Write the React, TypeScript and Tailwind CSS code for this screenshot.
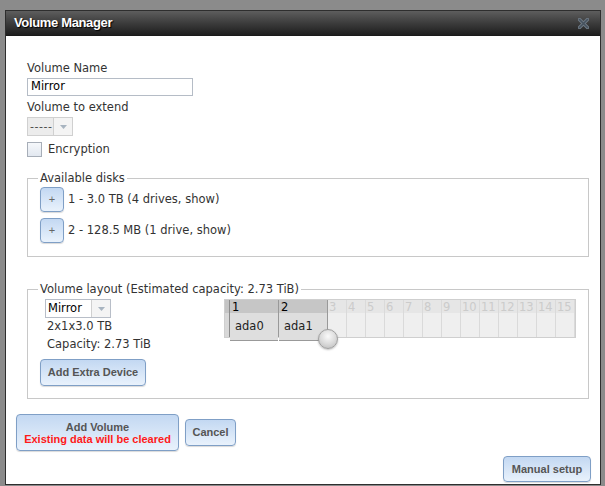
import React from "react";

const body = { fontFamily: '"DejaVu Sans", Verdana, sans-serif' };
const btnFont = { fontFamily: '"Liberation Sans", Tahoma, Arial, sans-serif' };

const blueBtn =
  "rounded-[4px] border border-[#7f9fc6] bg-gradient-to-b from-[#c3d8f2] to-[#e9f2fc] shadow-[0_1px_1px_rgba(0,0,0,0.15)] text-[#555] font-bold text-[11px]";

const SLOTS = [3, 4, 5, 6, 7, 8, 9, 10, 11, 12, 13, 14, 15];

function ArrowBox() {
  return (
    <div className="flex h-full w-[19px] items-center justify-center border-l border-[#d0d0d0] bg-[#f4f4f4]">
      <svg width="7" height="4" viewBox="0 0 7 4">
        <path d="M0 0 L7 0 L3.5 4 Z" fill="#a8b4c0" />
      </svg>
    </div>
  );
}

function DiskGrid() {
  return (
    <div className="relative mt-[2px] flex h-[39px] border border-[#cfcfcf]" style={body}>
      {/* left gutter */}
      <div className="flex w-[5px] flex-col border-r border-[#8c8c8c]">
        <div className="h-[13px] bg-[#c4c4c4]" />
        <div className="flex-1 bg-[#d8d8d8]" />
      </div>
      {["ada0", "ada1"].map((d, i) => (
        <div key={d} className="flex w-[49px] flex-col border-r border-[#999]">
          <div className="h-[13px] bg-[#c6c6c6] pl-[2px] text-[11.5px] leading-[14px] text-black">
            {i + 1}
          </div>
          <div className="flex-1 border-b border-[#999] bg-[#dedede] pl-[5px] text-[11.5px] leading-[27px] text-[#222]">
            {d}
          </div>
        </div>
      ))}
      {SLOTS.map((n) => (
        <div key={n} className="flex w-[19px] flex-col border-r border-[#dadada] last:border-r-0">
          <div className="h-[13px] bg-[#e6e6e6] pl-[1px] text-[11.5px] leading-[14px] text-[#cbcbcb]">
            {n}
          </div>
          <div className="flex-1 bg-[#efefef]" />
        </div>
      ))}
      {/* resize handle */}
      <div className="absolute left-[93px] top-[29px] h-[20px] w-[20px] rounded-full border border-[#a0a0a0] bg-[radial-gradient(circle_at_50%_35%,#fafafa_0%,#dcdcdc_50%,#b8b8b8_100%)] shadow-[0_1px_2px_rgba(0,0,0,0.25)]" />
    </div>
  );
}

export default function App() {
  return (
    <div className="h-[486px] w-[605px] overflow-hidden bg-[#8b8b8b] pl-[5px] pt-[10px]" style={body}>
      <div className="flex h-[475px] w-[596px] flex-col border border-[#2e2e2e] bg-white">
        {/* Title bar */}
        <div className="flex h-[25px] items-center justify-between border-b border-[#1a1a1a] bg-gradient-to-b from-[#5e5e5e] to-[#1e1e1e] pl-[8px] pr-[11px]">
          <span
            className="text-[13px] font-bold tracking-[-0.35px] text-white [text-shadow:1px_1px_1px_#000]"
            style={btnFont}
          >
            Volume Manager
          </span>
          <svg width="11" height="11" viewBox="0 0 11 11">
            <path d="M1.5 1.5 L9.5 9.5 M9.5 1.5 L1.5 9.5" stroke="#6f7a85" strokeWidth="3.4" strokeLinecap="round" />
            <path d="M1.5 1.5 L9.5 9.5 M9.5 1.5 L1.5 9.5" stroke="#46525e" strokeWidth="1.6" strokeLinecap="round" />
          </svg>
        </div>

        {/* Body */}
        <div className="flex flex-1 flex-col pl-[21px] pt-[24px] text-[11.5px] text-[#333]">
          <div className="h-[16px] leading-[16px]">Volume Name</div>
          <div className="mt-[2px] flex h-[18px] w-[166px] items-center border border-[#b5bcc6] pl-[3px] text-black">
            Mirror
          </div>
          <div className="mt-[3px] h-[16px] leading-[16px]">Volume to extend</div>
          <div className="mt-[2px] flex h-[19px] w-[46px] items-center border border-[#d0d0d0] bg-[#ececec]">
            <div className="flex-1 pl-[2px] text-[11px] leading-none tracking-[0.5px] text-[#444]">-----</div>
            <ArrowBox />
          </div>
          <div className="mt-[6px] flex items-center">
            <div className="h-[15px] w-[15px] border border-[#a7aeb8] bg-gradient-to-b from-[#f6f8fb] to-[#e2e8f0]" />
            <span className="ml-[6px] leading-[15px]">Encryption</span>
          </div>

          {/* Available disks */}
          <fieldset className="mt-[13px] w-[562px] border border-[#c8c8c8] px-[10px] pb-[13px] pt-0">
            <legend className="px-[2px] leading-[16px]">Available disks</legend>
            <div className="mt-[1px] flex flex-col gap-[6px] pl-[2px]">
              {["1 - 3.0 TB (4 drives, show)", "2 - 128.5 MB (1 drive, show)"].map((t) => (
                <div key={t} className="flex items-center">
                  <button className={`${blueBtn} flex h-[25px] w-[24px] items-center justify-center font-normal text-[#666]`} style={btnFont}>
                    +
                  </button>
                  <span className="ml-[4px]">{t}</span>
                </div>
              ))}
            </div>
          </fieldset>

          {/* Volume layout */}
          <fieldset className="mt-[24px] w-[562px] border border-[#c8c8c8] px-[10px] pb-[12px] pt-0">
            <legend className="px-[2px] leading-[16px]">Volume layout (Estimated capacity: 2.73 TiB)</legend>
            <div className="flex pl-[2px]">
              <div className="flex w-[184px] flex-col">
                <div className="ml-[5px] mt-[2px] flex h-[19px] w-[66px] items-center border border-[#b8bec8] bg-white">
                  <div className="flex-1 pl-[2px] text-black">Mirror</div>
                  <ArrowBox />
                </div>
                <div className="ml-[7px] h-[16px] leading-[16px]">2x1x3.0 TB</div>
                <div className="ml-[7px] mt-[2px] h-[16px] leading-[16px]">Capacity: 2.73 TiB</div>
                <button className={`${blueBtn} mt-[7px] h-[27px] w-[106px]`} style={btnFont}>
                  Add Extra Device
                </button>
              </div>
              <div>
                <DiskGrid />
              </div>
            </div>
          </fieldset>

          {/* Actions */}
          <div className="ml-[-11px] mt-[15px] flex items-center gap-[6px]" style={btnFont}>
            <button className={`${blueBtn} flex h-[37px] w-[163px] flex-col items-center justify-center leading-[12px]`}>
              <span>Add Volume</span>
              <span className="text-[#ff1a1a]">Existing data will be cleared</span>
            </button>
            <button className={`${blueBtn} h-[27px] w-[51px]`}>Cancel</button>
          </div>
          <div className="mr-[9px] mt-[5px] flex justify-end" style={btnFont}>
            <button className={`${blueBtn} h-[26px] w-[88px]`}>Manual setup</button>
          </div>
        </div>
      </div>
    </div>
  );
}
